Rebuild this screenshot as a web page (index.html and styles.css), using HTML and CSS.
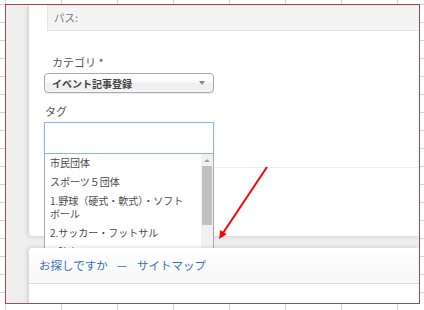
FILE: index.html
```html
<!DOCTYPE html>
<html lang="ja">
<head>
    <meta charset="UTF-8">
    <meta name="viewport" content="width=device-width, initial-scale=1.0">
    <title>記事登録</title>
    <link rel="stylesheet" href="styles.css">
</head>
<body>
    <div class="frame">
        <div class="card">
            <div class="path">パス:</div>

            <label class="field-label cat-label">カテゴリ *</label>
            <div class="select">
                <span>イベント記事登録</span>
                <b class="caret"></b>
            </div>

            <label class="field-label tag-label">タグ</label>
            <div class="tags">
                <div class="tag-input"></div>
                <div class="dropdown">
                    <ul class="results">
                        <li>市民団体</li>
                        <li>スポーツ５団体</li>
                        <li>1.野球（硬式・軟式）・ソフトボール</li>
                        <li>2.サッカー・フットサル</li>
                        <li>3.陸上・マラソン</li>
                    </ul>
                    <div class="scrollbar">
                        <span class="up"></span>
                        <span class="thumb"></span>
                    </div>
                </div>
            </div>

            <div class="divider"></div>
        </div>

        <div class="footer">
            <div class="footer-head">
                <a href="#">お探しですか</a>
                <span class="sep">—</span>
                <a href="#">サイトマップ</a>
            </div>
        </div>

        <!-- annotation arrow -->
        <svg class="arrow" width="70" height="90" viewBox="0 0 70 90">
            <line x1="56" y1="7" x2="12" y2="73" stroke="#ff0000" stroke-width="2"/>
            <polygon points="8,79 15.6,74.3 9.3,70" fill="#ff0000"/>
        </svg>
    </div>
</body>
</html>
```

FILE: styles.css
```css
body {
    margin: 0;
    padding: 0;
    font-family: "Noto Sans CJK JP", "Noto Sans", sans-serif;
    background-color: #fff;
    background-image:
        linear-gradient(to right, #d4d4d4 1px, transparent 1px),
        linear-gradient(to bottom, #d4d4d4 1px, transparent 1px);
    background-size: 56px 18px;
    background-position: 5px 4px;
    height: 310px;
    overflow: hidden;
}

.frame {
    position: relative;
    box-sizing: border-box;
    width: 415px;
    height: 300px;
    margin: 4px 0 0 5px;
    padding-left: 23px;
    border: 1px solid #a24a4a;
    background: #efefef;
    overflow: hidden;
}

.card {
    background: #fff;
    padding-bottom: 68px;
    border-bottom-left-radius: 4px;
    box-shadow: -2px 1px 4px rgba(0, 0, 0, 0.12);
}

.path {
    box-sizing: border-box;
    height: 26px;
    margin-left: 18px;
    padding-left: 6px;
    background: #f4f4f4;
    border: 1px solid #e4e4e4;
    border-right: none;
    color: #777;
    font-size: 10.5px;
    line-height: 24px;
}

.field-label {
    display: block;
    color: #555;
    font-size: 11px;
    line-height: 14px;
}

.cat-label {
    margin: 24px 0 0 23px;
}

.tag-label {
    margin: 11px 0 0 16px;
}

.select {
    box-sizing: border-box;
    display: flex;
    align-items: center;
    width: 170px;
    height: 20px;
    margin: 4px 0 0 15px;
    padding: 0 7px;
    border: 1px solid #aaa;
    border-radius: 4px;
    background: linear-gradient(#fff 20%, #f6f6f6 50%, #eee 52%, #f4f4f4 100%);
    box-shadow: 0 0 2px #fff inset, 0 1px 1px rgba(0, 0, 0, 0.08);
    color: #444;
    font-size: 10px;
    font-weight: bold;
}

.caret {
    margin-left: auto;
    margin-right: 1px;
    border-left: 3px solid transparent;
    border-right: 3px solid transparent;
    border-top: 4px solid #888;
}

.tags {
    position: relative;
    width: 170px;
    margin: 4px 0 0 15px;
}

.tag-input {
    box-sizing: border-box;
    height: 32px;
    border: 1px solid #8db3ea;
    background: #fff;
    box-shadow: 0 0 3px rgba(100, 150, 230, 0.2);
}

/* list sinks under the footer card, so clip it right at that edge */
.dropdown {
    position: absolute;
    top: 100%;
    left: 0;
    z-index: 2;
    box-sizing: border-box;
    display: flex;
    width: 170px;
    height: 95px;
    overflow: hidden;
    background: #fff;
    border: 1px solid #aaa;
    border-top: none;
    border-bottom: none;
}

.results {
    flex: 1;
    margin: 0;
    padding: 0;
    list-style: none;
}

.results li {
    padding: 3px 10px 3px 5px;
    color: #4a4a4a;
    font-size: 10px;
    line-height: 13px;
}

.results li:first-child {
    padding-top: 2px;
}

.scrollbar {
    display: flex;
    flex-direction: column;
    align-items: center;
    width: 12px;
    background: #f1f1f1;
}

.scrollbar .up {
    width: 0;
    height: 0;
    margin: 5px 0 4px;
    border-left: 3px solid transparent;
    border-right: 3px solid transparent;
    border-bottom: 3px solid #a3a3a3;
}

.scrollbar .thumb {
    width: 10px;
    height: 59px;
    background: #c1c1c1;
}

.divider {
    margin: 13px 0 0 15px;
    border-top: 1px solid #eee;
}

.footer {
    position: relative;
    z-index: 3;
    height: 60px;
    margin-top: 12px;
    background: #fff;
    border-top-left-radius: 4px;
    box-shadow: -2px -1px 4px rgba(0, 0, 0, 0.12);
}

.footer-head {
    box-sizing: border-box;
    display: flex;
    align-items: center;
    height: 36px;
    padding: 0 0 1px 10px;
    background: linear-gradient(#fff, #f7f7f7);
    border-bottom: 1px solid #ddd;
    border-top-left-radius: 4px;
    color: #3572b6;
    font-size: 11.5px;
}

.footer-head a {
    color: #3572b6;
    text-decoration: none;
}

.footer-head .sep {
    margin: 0 10px 0 9px;
}

.arrow {
    position: absolute;
    left: 205px;
    top: 155px;
    z-index: 4;
}
```
